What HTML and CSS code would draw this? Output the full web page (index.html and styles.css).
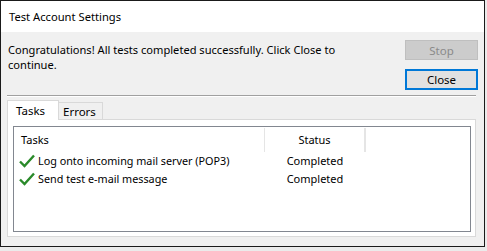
FILE: index.html
```html
<!DOCTYPE html>
<html lang="en">
<head>
    <meta charset="UTF-8">
    <meta name="viewport" content="width=device-width, initial-scale=1.0">
    <title>Test Account Settings</title>
    <link rel="stylesheet" href="styles.css">
</head>
<body>
    <div class="window">
        <header class="titlebar">Test Account Settings</header>
        <section class="content">
            <div class="top-row">
                <p class="message">Congratulations! All tests completed successfully. Click Close to continue.</p>
                <div class="buttons">
                    <button type="button" class="btn" disabled>Stop</button>
                    <button type="button" class="btn default">Close</button>
                </div>
            </div>
            <div class="separator"></div>
            <div class="tabs">
                <div class="tab active">Tasks</div>
                <div class="tab">Errors</div>
            </div>
            <div class="panel">
                <div class="list">
                    <div class="list-head">
                        <div class="col-task">Tasks</div>
                        <div class="col-status">Status</div>
                        <div class="col-rest"></div>
                    </div>
                    <div class="list-row">
                        <div class="col-task">
                            <svg class="check" width="16" height="14" viewBox="0 0 16 14"><path d="M1 7.5 L5.5 12 L15 1.5" fill="none" stroke="#2a8a2a" stroke-width="2.4"/></svg>
                            <span class="task-name">Log onto incoming mail server (POP3)</span>
                        </div>
                        <div class="col-status">Completed</div>
                    </div>
                    <div class="list-row">
                        <div class="col-task">
                            <svg class="check" width="16" height="14" viewBox="0 0 16 14"><path d="M1 7.5 L5.5 12 L15 1.5" fill="none" stroke="#2a8a2a" stroke-width="2.4"/></svg>
                            <span class="task-name">Send test e-mail message</span>
                        </div>
                        <div class="col-status">Completed</div>
                    </div>
                </div>
            </div>
        </section>
    </div>
</body>
</html>
```

FILE: styles.css
```css
*{
    margin: 0;
    padding: 0;
    box-sizing: border-box;
}

body{
    background: #ebebeb;
    font-family: "Noto Sans", "Open Sans", sans-serif;
    font-size: 11px;
    color: #000;
}

.window{
    width: 485px;
    height: 247px;
    border: 1px solid #1a1a1a;
    background: #f0f0f0;
    display: flex;
    flex-direction: column;
}

.titlebar{
    height: 31px;
    background: #fff;
    padding: 8px 0 0 8px;
    line-height: 16px;
    font-size: 11.2px;
}

.content{
    flex: 1;
    padding: 8px 6px 0 6px;
}

.top-row{
    display: flex;
    justify-content: space-between;
}

.message{
    width: 345px;
    line-height: 15px;
    padding: 2px 0 0 1px;
    font-size: 11.1px;
}

.buttons{
    display: flex;
    flex-direction: column;
    gap: 9px;
}

.btn{
    width: 73px;
    height: 20px;
    font-family: inherit;
    font-size: 11.5px;
    background: #e1e1e1;
    border: 1px solid #adadad;
    color: #000;
}

.btn:disabled{
    background: #cccccc;
    border-color: #bfbfbf;
    color: #8a8a8a;
}

.btn.default{
    height: 21px;
    border: 2px solid #0078d7;
}

.separator{
    margin: 5px 2px 0 0;
    height: 2px;
    border-top: 1px solid #a0a0a0;
    border-bottom: 1px solid #fff;
}

.tabs{
    display: flex;
    margin-top: 3px;
    align-items: flex-end;
}

.tab{
    height: 17px;
    padding: 0 5px 0 4px;
    border: 1px solid #d9d9d9;
    border-bottom: none;
    line-height: 17px;
    font-size: 11.5px;
}

.tab.active{
    height: 20px;
    width: 52px;
    background: #fff;
    padding: 1px 0 0 8px;
    position: relative;
    z-index: 1;
    margin-bottom: -1px;
}

.tab + .tab{
    border-left: none;
    width: 44px;
}

.panel{
    width: 469px;
    height: 118px;
    border: 1px solid #d9d9d9;
    background: #fff;
    padding: 6px 4px 4px 5px;
}

.list{
    height: 106px;
    border: 1px solid #828790;
}

.list-head,
.list-row{
    display: flex;
}

.list-head{
    height: 25px;
    padding-top: 1px;
}

.list-head > div{
    line-height: 24px;
    border-right: 1px solid #e5e5e5;
}

.list-head .col-task{
    padding-left: 7px;
}

.col-task{
    width: 251px;
    display: flex;
    align-items: center;
    padding-left: 5px;
}

.task-name{
    font-size: 10.8px;
}

.col-status{
    width: 100px;
    text-align: center;
}

.col-rest{
    width: 1px;
}

.list-row{
    height: 18px;
    line-height: 18px;
}

.check{
    margin-right: 3px;
}
```
